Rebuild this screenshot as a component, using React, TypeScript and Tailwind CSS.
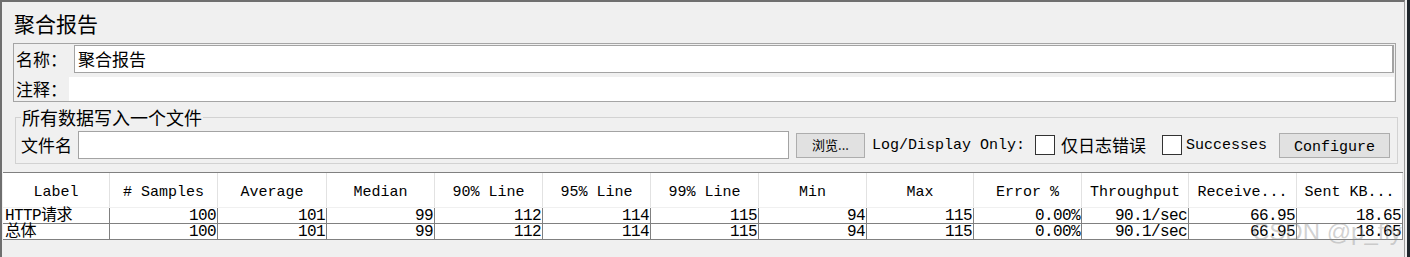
import React from 'react';

const cjk = "font-['Noto_Sans_CJK_SC','Noto_Sans',sans-serif]";
const mono = "font-['Liberation_Mono','Noto_Sans_CJK_SC',monospace]";

const headers = [
  'Label',
  '# Samples',
  'Average',
  'Median',
  '90% Line',
  '95% Line',
  '99% Line',
  'Min',
  'Max',
  'Error %',
  'Throughput',
  'Receive...',
  'Sent KB...',
];

const rows = [
  ['HTTP请求', '100', '101', '99', '112', '114', '115', '94', '115', '0.00%', '90.1/sec', '66.95', '18.65'],
  ['总体', '100', '101', '99', '112', '114', '115', '94', '115', '0.00%', '90.1/sec', '66.95', '18.65'],
];

const cols =
  'grid grid-cols-[107px_108px_109px_108px_108px_108px_108px_108px_107px_108px_107px_108px_106px]';

function Checkbox() {
  return <div className="w-[20px] h-[20px] bg-white border border-[#333333] shrink-0" />;
}

export default function App() {
  return (
    <div className="relative flex w-[1410px] h-[257px] bg-[#f0f0f0] overflow-hidden text-black">
      <div className="flex flex-col w-[1405px] h-full border-t-2 border-l-2 border-[#6f6f6f] border-r border-r-[#9c9c9c]">
        {/* Title */}
        <div className={`h-[41px] pl-[12px] pt-[3px] flex items-center text-[21px] ${cjk}`}>聚合报告</div>

        {/* Name / comment */}
        <div className="ml-[11px] w-[1383px] h-[59px] border border-[#a5a5a5] pt-px flex flex-col">
          <div className="flex h-[28px]">
            <div className={`w-[60px] pl-[2px] flex items-center text-[17px] ${cjk}`}>名称：</div>
            <div className={`flex-1 mr-px bg-white border border-[#a3a3a3] border-r-2 flex items-center pl-[3px] text-[17px] ${cjk}`}>
              聚合报告
            </div>
          </div>
          <div className="flex h-[24px] mt-[4px]">
            <div className={`w-[55px] pl-[2px] flex items-center text-[17px] ${cjk}`}>注释：</div>
            <div className="flex-1 mr-px bg-white" />
          </div>
        </div>

        {/* File group */}
        <fieldset className="ml-[13px] mt-[6px] w-[1383px] border border-[#d2d2d2] pb-[4px]">
          <legend className={`ml-[5px] px-px text-[18px] leading-[18px] ${cjk}`}>所有数据写入一个文件</legend>
          <div className="flex items-center h-[28px] mt-[5px] pl-[5px]">
            <div className={`w-[57px] text-[17px] ${cjk}`}>文件名</div>
            <div className="w-[711px] h-[28px] bg-white border border-[#a3a3a3]" />
            <button className={`ml-[7px] w-[69px] h-[25px] bg-[#e1e1e1] border border-[#adadad] text-[13px] ${cjk}`}>
              浏览...
            </button>
            <div className={`ml-[7px] pt-[3px] text-[15px] ${mono}`}>Log/Display Only:</div>
            <div className="ml-[10px]">
              <Checkbox />
            </div>
            <div className={`ml-[6px] text-[17px] ${cjk}`}>仅日志错误</div>
            <div className="ml-[16px]">
              <Checkbox />
            </div>
            <div className={`ml-[4px] pt-[3px] text-[15px] ${mono}`}>Successes</div>
            <button className={`ml-[12px] w-[111px] h-[25px] pt-[3px] bg-[#e1e1e1] border border-[#adadad] text-[15px] ${mono}`}>
              Configure
            </button>
          </div>
        </fieldset>

        {/* Results table */}
        <div className="ml-px mt-[8px] w-[1400px] border-t border-[#808080]">
          <div className={`${cols} h-[35px] bg-white border-b border-[#f0f0f0]`}>
            {headers.map((h) => (
              <div key={h} className={`flex items-center justify-center border-r border-[#e2e2e2] text-[15px] pt-[7px] ${mono}`}>
                {h}
              </div>
            ))}
          </div>
          {rows.map((r, i) => (
            <div key={i} className={`${cols} h-[16px] bg-white border-b border-[#808080]`}>
              {r.map((c, j) => (
                <div
                  key={j}
                  className={`border-r border-[#808080] text-[16px] leading-[16px] tracking-[-0.6px] whitespace-nowrap overflow-visible ${mono} ${
                    j === 0 ? 'pl-[2px] text-left' : 'pr-px text-right'
                  }`}
                >
                  {c}
                </div>
              ))}
            </div>
          ))}
        </div>
      </div>
      <div className="w-[2px] h-full bg-[#f0f0f0]" />
      <div className="w-[3px] h-full bg-[#1e252b]" />

      {/* watermark */}
      <div className="absolute left-[1252px] top-[214px] text-[24px] text-[#8c8c8c]/40 font-['Liberation_Sans',sans-serif] pointer-events-none">
        CSDN @p_fly
      </div>
    </div>
  );
}
